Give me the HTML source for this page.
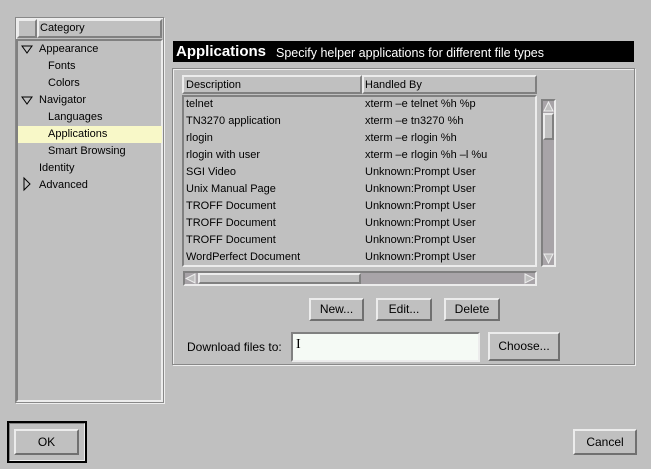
<!DOCTYPE html>
<html><head><style>
*{margin:0;padding:0;box-sizing:border-box}
body{width:651px;height:469px;background:#c0c0c0;font-family:"Liberation Sans",sans-serif;font-size:11px;color:#000;position:relative;overflow:hidden}
.a{position:absolute}
.out{border:2px solid;border-color:#ececec #808080 #808080 #ececec}
.in{border:2px solid;border-color:#808080 #ececec #ececec #808080}
.etch{border:1px solid #888;box-shadow:1px 1px 0 #eee inset,1px 1px 0 #eee}
.t{position:absolute;white-space:nowrap;line-height:12px}
.btn{position:absolute;border:2px solid;border-color:#ececec #707070 #707070 #ececec;text-align:center;font-size:12px;line-height:18px;background:#c0c0c0}
</style></head><body>
<div class="a etch" style="left:15px;top:17px;width:149px;height:386px"></div>
<div class="a out" style="left:17px;top:19px;width:20px;height:19px"></div>
<div class="a out" style="left:37px;top:19px;width:125px;height:19px"></div>
<div class="t" style="left:40px;top:22px">Category</div>
<div class="a in" style="left:16px;top:39px;width:147px;height:363px"></div>
<div class="a" style="left:18px;top:126px;width:144px;height:17px;background:#f8f8c8"></div>
<svg class="a" style="left:20px;top:44px" width="14" height="150"><path d="M2 2H12L7 9Z" fill="none" stroke="#000"/><path d="M2 53H12L7 60Z" fill="none" stroke="#000"/><path d="M4 134V146L10 140Z" fill="none" stroke="#000"/></svg>
<div class="t" style="left:39px;top:43px">Appearance</div>
<div class="t" style="left:48px;top:60px">Fonts</div>
<div class="t" style="left:48px;top:77px">Colors</div>
<div class="t" style="left:39px;top:94px">Navigator</div>
<div class="t" style="left:48px;top:111px">Languages</div>
<div class="t" style="left:48px;top:128px">Applications</div>
<div class="t" style="left:48px;top:145px">Smart Browsing</div>
<div class="t" style="left:39px;top:162px">Identity</div>
<div class="t" style="left:39px;top:179px">Advanced</div>
<div class="a" style="left:173px;top:41px;width:461px;height:21px;background:#000"></div>
<div class="t" style="left:176px;top:43px;color:#fff;font-weight:bold;font-size:15px;line-height:17px">Applications</div>
<div class="t" style="left:276px;top:46px;color:#fff;font-size:12.5px;line-height:14px">Specify helper applications for different file types</div>
<div class="a etch" style="left:172px;top:68px;width:463px;height:297px"></div>
<div class="a out" style="left:182px;top:75px;width:180px;height:19px"></div>
<div class="a out" style="left:362px;top:75px;width:175px;height:19px"></div>
<div class="t" style="left:186px;top:79px">Description</div>
<div class="t" style="left:365px;top:79px">Handled By</div>
<div class="a in" style="left:182px;top:95px;width:355px;height:172px"></div>
<div class="t" style="left:186px;top:98px">telnet</div><div class="t" style="left:365px;top:98px">xterm –e telnet %h %p</div>
<div class="t" style="left:186px;top:115px">TN3270 application</div><div class="t" style="left:365px;top:115px">xterm –e tn3270 %h</div>
<div class="t" style="left:186px;top:132px">rlogin</div><div class="t" style="left:365px;top:132px">xterm –e rlogin %h</div>
<div class="t" style="left:186px;top:149px">rlogin with user</div><div class="t" style="left:365px;top:149px">xterm –e rlogin %h –l %u</div>
<div class="t" style="left:186px;top:166px">SGI Video</div><div class="t" style="left:365px;top:166px">Unknown:Prompt User</div>
<div class="t" style="left:186px;top:183px">Unix Manual Page</div><div class="t" style="left:365px;top:183px">Unknown:Prompt User</div>
<div class="t" style="left:186px;top:200px">TROFF Document</div><div class="t" style="left:365px;top:200px">Unknown:Prompt User</div>
<div class="t" style="left:186px;top:217px">TROFF Document</div><div class="t" style="left:365px;top:217px">Unknown:Prompt User</div>
<div class="t" style="left:186px;top:234px">TROFF Document</div><div class="t" style="left:365px;top:234px">Unknown:Prompt User</div>
<div class="t" style="left:186px;top:251px">WordPerfect Document</div><div class="t" style="left:365px;top:251px">Unknown:Prompt User</div>
<div class="a in" style="left:541px;top:99px;width:15px;height:168px;background:#a8a4a8"></div>
<div class="a out" style="left:543px;top:113px;width:11px;height:27px;background:#c0c0c0"></div>
<svg class="a" style="left:543px;top:101px" width="11" height="164"><path d="M1 10L5.5 1L10 10Z" fill="#c0c0c0" stroke="#eee"/><path d="M1 153L5.5 162L10 153Z" fill="#c0c0c0" stroke="#eee"/></svg>
<div class="a in" style="left:183px;top:271px;width:354px;height:15px;background:#a8a4a8"></div>
<div class="a out" style="left:198px;top:273px;width:163px;height:11px;background:#c0c0c0"></div>
<svg class="a" style="left:185px;top:273px" width="350" height="11"><path d="M10 1L1 5.5L10 10Z" fill="#c0c0c0" stroke="#eee"/><path d="M340 1L349 5.5L340 10Z" fill="#c0c0c0" stroke="#eee"/></svg>
<div class="btn" style="left:309px;top:298px;width:55px;height:23px">New...</div>
<div class="btn" style="left:376px;top:298px;width:56px;height:23px">Edit...</div>
<div class="btn" style="left:444px;top:298px;width:56px;height:23px">Delete</div>
<div class="t" style="left:187px;top:341px;font-size:12px">Download files to:</div>
<div class="a in" style="left:291px;top:332px;width:189px;height:30px;background:#f5faf5"></div>
<div class="t" style="left:296px;top:339px;font-size:14px;font-family:'Liberation Serif',serif">I</div>
<div class="btn" style="left:488px;top:332px;width:72px;height:29px;line-height:25px">Choose...</div>
<div class="a" style="left:7px;top:421px;width:80px;height:42px;border:2px solid #000"></div>
<div class="a in" style="left:9px;top:423px;width:76px;height:38px;border-width:1px"></div>
<div class="btn" style="left:14px;top:429px;width:65px;height:26px;line-height:22px">OK</div>
<div class="btn" style="left:573px;top:429px;width:64px;height:26px;line-height:22px">Cancel</div>
</body></html>
